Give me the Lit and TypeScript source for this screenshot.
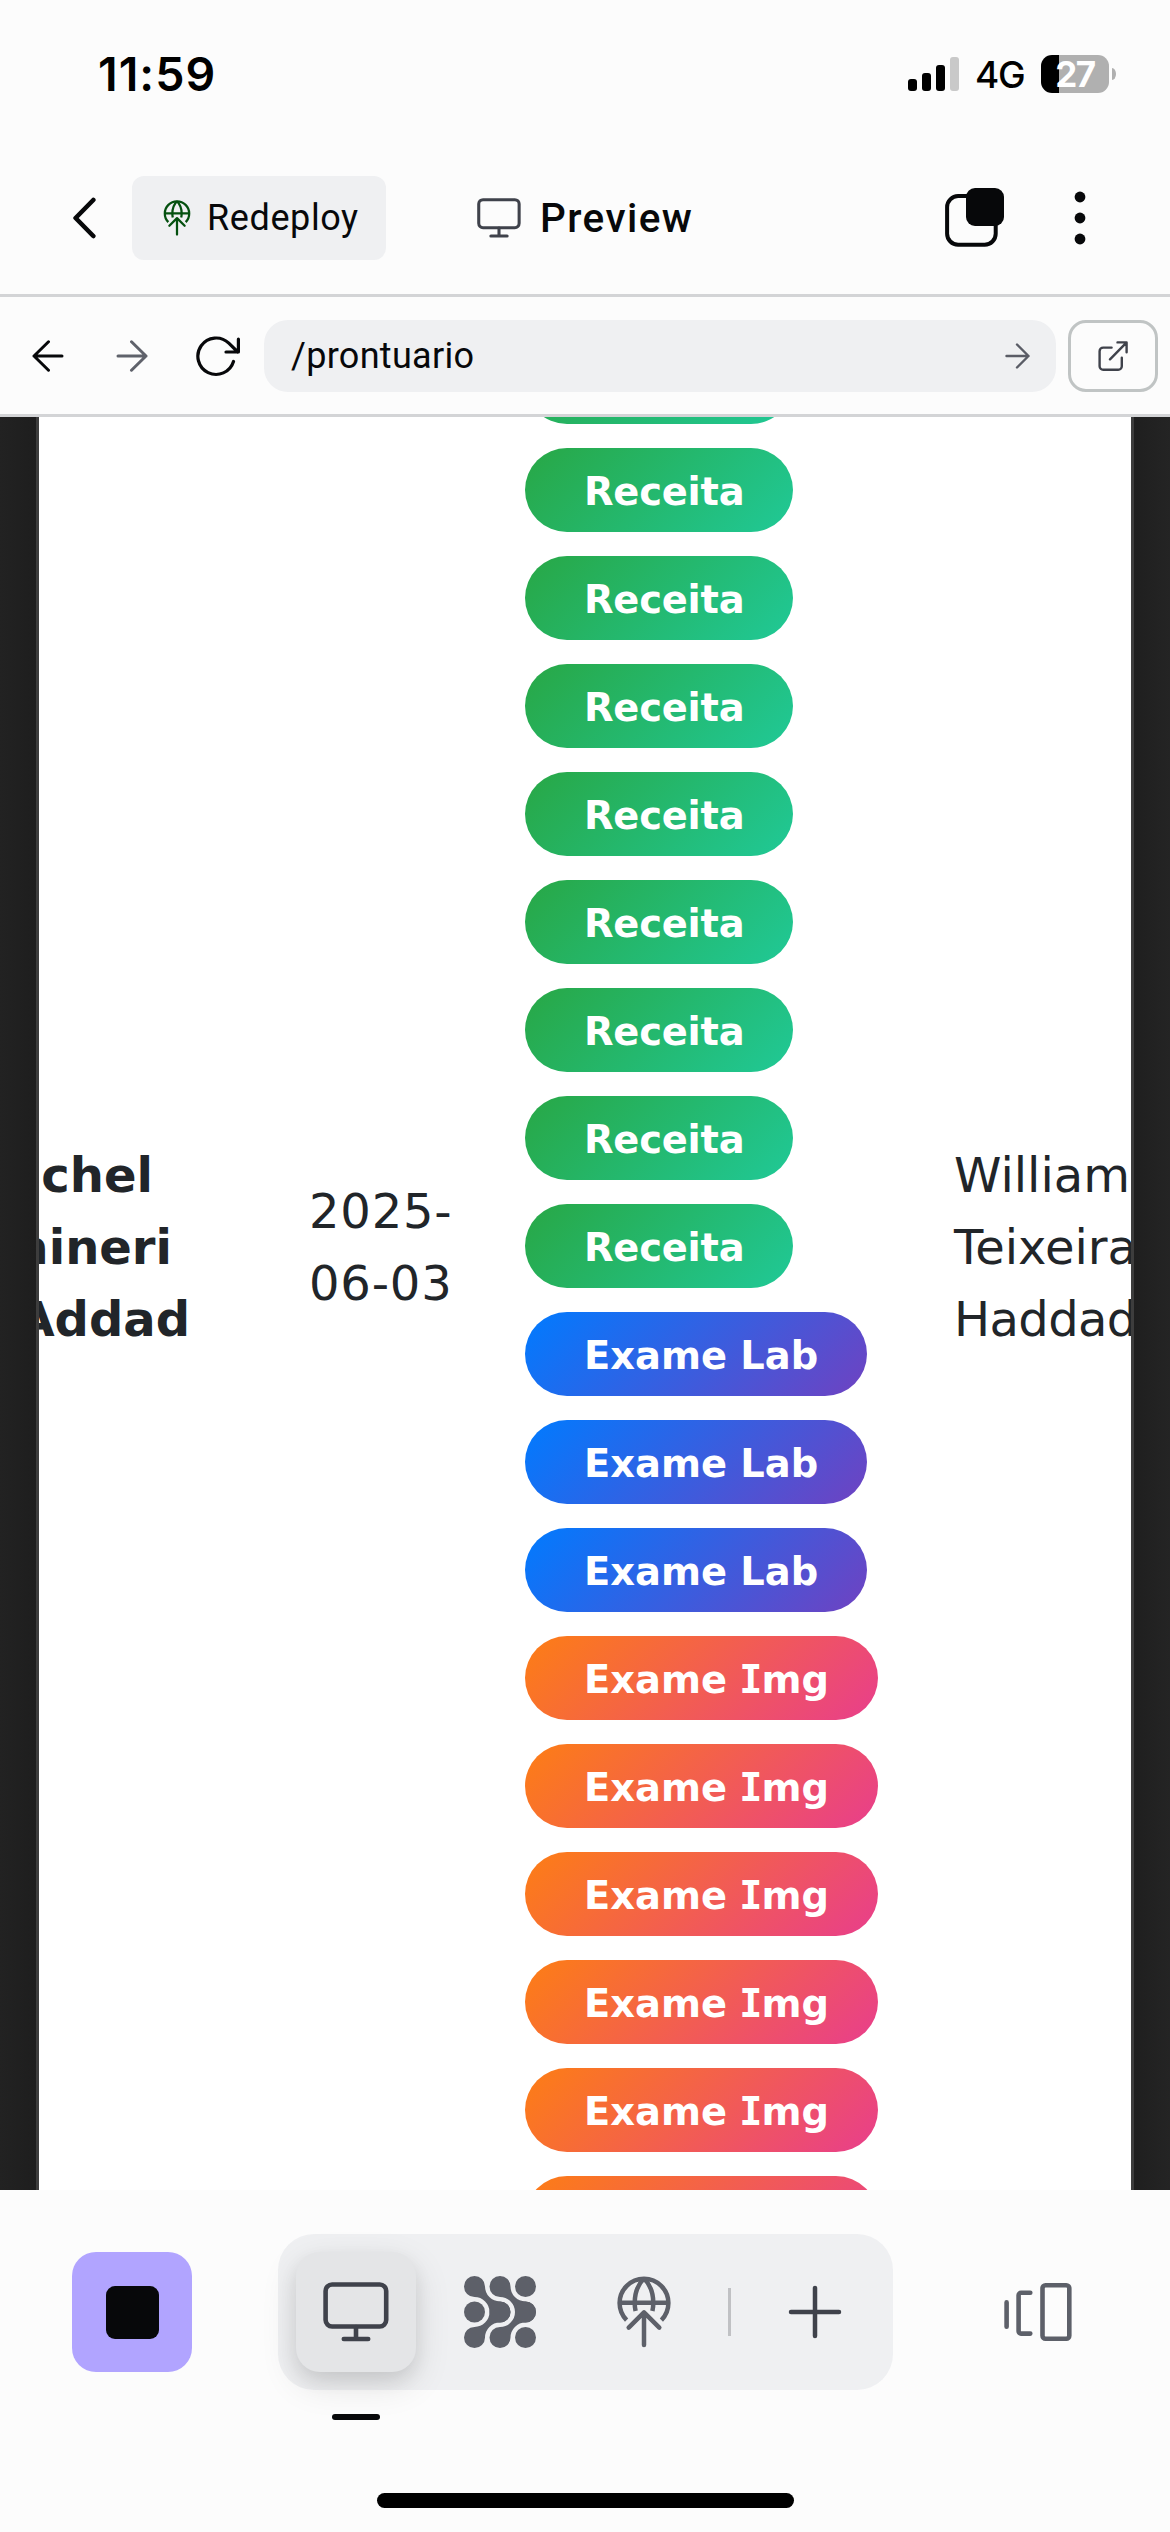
import { LitElement, html, css, svg } from "lit";
import { customElement } from "lit/decorators.js";

const monitor = html`<svg class="monitor" viewBox="0 0 66 60" fill="none" stroke="currentColor" stroke-width="4.6" stroke-linecap="round">
  <rect x="2.6" y="2.5" width="60.6" height="42" rx="6.5"></rect>
  <path d="M33 45v12M20.8 57h24.4"></path>
</svg>`;

const deployGlobe = html`<svg class="globe" viewBox="0 0 72 72" fill="none" stroke="currentColor" stroke-width="4.5">
  <path d="M18.6 44.2A24.4 24.4 0 1 1 53.4 44.2"></path>
  <path d="M11.5 26.8h49M36 2.5C29.5 9 26.7 18 26.7 27q0 4 .9 8M36 2.5C42.5 9 45.3 18 45.3 27q0 4-.9 8"></path>
  <path d="M36 69V36.4M20.7 51.6 36 36.3 51.3 51.6" stroke-linecap="round" stroke-linejoin="round"></path>
</svg>`;

const neck = "M10.5 21A10.5 10.5 0 1 1 21 10.5A15 15 0 0 0 36 25.5A10.5 10.5 0 1 1 25.5 36A15 15 0 0 0 10.5 21Z";
const agentGrid = html`<svg class="grid-icon" viewBox="0 0 72 72" fill="currentColor">
  ${["", "translate(25.5 0)", "translate(0 72) scale(1 -1)", "translate(25.5 72) scale(1 -1)"].map(
    (t) => svg`<path d=${neck} transform=${t}></path>`
  )}
  <circle cx="61.5" cy="10.5" r="10.5"></circle>
  <circle cx="10.5" cy="36" r="10.5"></circle>
  <circle cx="61.5" cy="61.5" r="10.5"></circle>
</svg>`;

@customElement("status-bar")
class StatusBar extends LitElement {
  static styles = css`
    :host { display: flex; align-items: center; height: 136px; padding: 6px 54px 0 98px; box-sizing: content-box; color: #000; font-family: Inter, "Liberation Sans", sans-serif; }
    .time { flex: 1; font-size: 46.5px; font-weight: 600; letter-spacing: 1px; }
    .signal { width: 52px; height: 34px; margin-right: 15px; display: block; flex: none; }
    .net { flex: none; font-size: 37px; font-weight: 500; letter-spacing: -1.4px; width: 66px; white-space: nowrap; }
    .battery { flex: none; width: 68px; height: 38px; border-radius: 11px; background: linear-gradient(to right, #000 18px, #b0b0b0 18px); color: #fff; font-size: 35px; font-weight: 700; letter-spacing: -1.5px; line-height: 38px; text-align: center; }
    .nub { flex: none; width: 4px; height: 12px; margin-left: 3px; border-radius: 0 4px 4px 0 / 0 6px 6px 0; background: #b0b0b0; }
  `;
  render() {
    return html`
      <span class="time">11:59</span>
      <svg class="signal" viewBox="0 0 52 34">
        <rect x="0" y="22" width="9" height="12" rx="3"></rect>
        <rect x="14" y="16" width="9" height="18" rx="3"></rect>
        <rect x="28" y="8" width="9" height="26" rx="3"></rect>
        <rect x="42" y="0" width="9" height="34" rx="3" fill="#c9c9c9"></rect>
      </svg>
      <span class="net">4G</span>
      <span class="battery">27</span><span class="nub"></span>
    `;
  }
}

@customElement("app-header")
class AppHeader extends LitElement {
  static styles = css`
    :host { display: flex; align-items: center; height: 152px; padding: 0 84px 0 72px; border-bottom: 3px solid #d3d4d6; color: #07080a; font-family: Roboto, "Open Sans", sans-serif; }
    svg { display: block; flex: none; }
    .back { width: 24px; height: 42px; }
    .redeploy { display: flex; align-items: center; box-sizing: border-box; width: 254px; height: 84px; margin-left: 36px; padding-left: 27px; border-radius: 12px; background: #eff0f2; font-size: 36px; letter-spacing: 0.6px; }
    .globe { width: 36px; height: 36px; margin-right: 12px; color: #04500f; }
    .title { display: flex; align-items: center; flex: 1; margin-left: 91px; font-size: 40.5px; font-weight: 500; letter-spacing: 1.4px; }
    .monitor { width: 44px; height: 40px; margin-right: 19px; color: #3f424b; }
    .tabs { width: 60px; height: 60px; margin-right: 69px; }
    .dots { width: 12px; height: 54px; }
  `;
  render() {
    return html`
      <svg class="back" viewBox="0 0 24 42" fill="none" stroke="currentColor" stroke-width="4.6" stroke-linecap="round" stroke-linejoin="round"><path d="M21.3 3 3.6 21l17.7 18"></path></svg>
      <div class="redeploy">${deployGlobe}<span>Redeploy</span></div>
      <div class="title">${monitor}<span>Preview</span></div>
      <svg class="tabs" viewBox="0 0 60 60">
        <rect x="2.1" y="8.1" width="48.6" height="48.6" rx="11" fill="none" stroke="currentColor" stroke-width="4"></rect>
        <rect x="21" y="0" width="38" height="38" rx="9" fill="currentColor"></rect>
      </svg>
      <svg class="dots" viewBox="0 0 12 54" fill="currentColor"><circle cx="6" cy="6" r="5.4"></circle><circle cx="6" cy="27" r="5.4"></circle><circle cx="6" cy="48" r="5.4"></circle></svg>
    `;
  }
}

@customElement("address-bar")
class AddressBar extends LitElement {
  static styles = css`
    :host { display: flex; align-items: center; height: 117px; padding: 0 12px 0 32px; border-bottom: 3px solid #d3d4d6; color: #07080a; font-family: Roboto, "Open Sans", sans-serif; }
    svg { display: block; flex: none; fill: none; stroke: currentColor; stroke-linecap: round; stroke-linejoin: round; }
    .arrow { width: 32px; height: 32px; stroke-width: 3; }
    .fwd { margin-left: 52px; color: #5f626b; }
    .reload { width: 46px; height: 42px; margin-left: 47px; stroke-width: 3.2; }
    .url { flex: 1; display: flex; align-items: center; justify-content: space-between; box-sizing: border-box; height: 72px; margin-left: 23px; padding: 0 26px 0 27px; border-radius: 24px; background: #eff0f2; font-size: 36px; letter-spacing: 0.3px; }
    .go { width: 25px; height: 26px; stroke-width: 2.4; color: #5a5c66; }
    .open { display: flex; align-items: center; justify-content: center; box-sizing: border-box; width: 90px; height: 72px; margin-left: 12px; border: 3px solid #c0c4c4; border-radius: 18px; color: #3f424b; }
    .ext { width: 30px; height: 30px; stroke-width: 2.4; }
  `;
  render() {
    return html`
      <svg class="arrow" viewBox="0 0 32 32"><path d="M30 16H2M16.5 1.8 2 16l14.5 14.2"></path></svg>
      <svg class="arrow fwd" viewBox="0 0 32 32"><path d="M2 16h28M15.5 1.8 30 16 15.5 30.2"></path></svg>
      <svg class="reload" viewBox="0 0 46 42"><path d="M38.5 26.5A18.2 18.2 0 1 1 33.8 8.2L42.8 17M43.4 4.2V17H31"></path></svg>
      <div class="url"><span>/prontuario</span>
        <svg class="go" viewBox="0 0 25 26"><path d="M1.5 13h22M12 1.5 23.5 13 12 24.5"></path></svg>
      </div>
      <div class="open"><svg class="ext" viewBox="0 0 30 30"><path d="M13.6 6.6H5.2a3.6 3.6 0 0 0-3.6 3.6v15a3.6 3.6 0 0 0 3.6 3.6h15a3.6 3.6 0 0 0 3.6-3.6v-8.4M12 18.3 28.4 1.6M19.5 1.4h9.1v9.8"></path></svg></div>
    `;
  }
}

type Kind = "receita" | "lab" | "img";
const kinds: Kind[] = [
  ...Array<Kind>(9).fill("receita"),
  ...Array<Kind>(3).fill("lab"),
  ...Array<Kind>(6).fill("img"),
];
const labels = {
  receita: html`Receita`,
  lab: html`Exame Lab`,
  img: html`Exame <span class="slab">I</span>mg`,
};

@customElement("page-frame")
class PageFrame extends LitElement {
  static styles = css`
    :host { display: block; height: 1773px; padding: 0 36px; background: linear-gradient(to right, #222 0, #1e1e1e 36px, #1f1f1f calc(100% - 36px), #242424 100%); overflow: hidden; }
    .row { display: flex; align-items: flex-start; box-sizing: border-box; height: 1773px; border: solid #3d3d3d; border-width: 0 3px; background: #fff; color: #212529; overflow: hidden; font: 48px/72px Verdana, "DejaVu Sans", sans-serif; }
    .patient { flex: none; width: 151px; padding-top: 722px; display: flex; flex-direction: column; align-items: flex-end; font-weight: 700; }
    .l1 { padding-right: 37px; }
    .l2 { padding-right: 18px; }
    .date { flex: none; width: 160px; margin-left: 119px; padding-top: 758px; letter-spacing: 0.8px; }
    .types { flex: none; display: flex; flex-direction: column; gap: 24px; width: 429px; margin: -77px 0 0 56px; }
    .doctor { flex: none; padding-top: 722px; }
    .tight { letter-spacing: -0.6px; }
    .pill { display: flex; align-items: center; flex: none; box-sizing: border-box; height: 84px; padding: 4px 0 0 59px; border-radius: 42px; color: #fff; font-weight: 700; font-size: 38.4px; line-height: 1; white-space: pre; }
    .receita { width: 268px; letter-spacing: -0.2px; background: linear-gradient(135deg, #28a745, #20c997); }
    .lab { width: 342px; background: linear-gradient(135deg, #007bff, #6f42c1); }
    .img { width: 353px; background: linear-gradient(135deg, #fd7e14, #e83e8c); }
    .slab { font-family: "DejaVu Sans Mono", monospace; margin: 0 -1px; }
  `;
  render() {
    return html`<div class="row">
      <div class="patient"><span class="l1">Rachel</span><span class="l2">Maineri</span><span>Addad</span></div>
      <div class="date">2025-<br />06-03</div>
      <div class="types">${kinds.map((k) => html`<div class="pill ${k}"><span>${labels[k]}</span></div>`)}</div>
      <div class="doctor">William<br />Teixeira<br /><span class="tight">Haddad</span></div>
    </div>`;
  }
}

@customElement("tool-dock")
class ToolDock extends LitElement {
  static styles = css`
    :host { display: flex; flex-direction: column; height: 342px; color: #5d6069; }
    svg { display: block; flex: none; }
    .dock { display: flex; align-items: center; height: 156px; padding: 44px 98px 0 72px; }
    .stop { display: flex; align-items: center; justify-content: center; width: 120px; height: 120px; border-radius: 24px; background: #b1a4ff; }
    .square { width: 53px; height: 53px; border-radius: 9px; background: #07080a; }
    .tray { display: flex; align-items: center; box-sizing: border-box; width: 615px; height: 156px; margin-left: 86px; padding-left: 18px; border-radius: 36px; background: #eff0f2; }
    .active { display: flex; align-items: center; justify-content: center; width: 120px; height: 120px; border-radius: 24px; background: #e4e5e7; color: #3f424b; box-shadow: 0 12px 36px rgba(0, 0, 0, 0.12), 0 8px 18px rgba(0, 0, 0, 0.08); }
    .monitor { width: 66px; height: 60px; }
    .grid-icon { width: 72px; height: 72px; margin-left: 48px; }
    .globe { width: 72px; height: 72px; margin-left: 72px; }
    .rule { width: 3px; height: 48px; margin-left: 48px; background: #c0c1c4; }
    .plus { width: 54px; height: 54px; margin-left: 57px; color: #3f424b; }
    .panels { width: 68px; height: 60px; margin-left: auto; }
    .mark { width: 48px; height: 6px; margin: 24px 0 0 332px; border-radius: 3px; background: #07080a; }
    .home { width: 417px; height: 15px; margin: 73px auto 0; border-radius: 8px; background: #000; }
  `;
  render() {
    return html`
      <div class="dock">
        <div class="stop"><div class="square"></div></div>
        <div class="tray">
          <div class="active">${monitor}</div>
          ${agentGrid}${deployGlobe}
          <div class="rule"></div>
          <svg class="plus" viewBox="0 0 54 54" stroke="currentColor" stroke-width="4.5" stroke-linecap="round"><path d="M27 3v48M3 27h48"></path></svg>
        </div>
        <svg class="panels" viewBox="0 0 68 60" fill="none" stroke="currentColor" stroke-width="4.6" stroke-linecap="round" stroke-linejoin="round">
          <path d="M2.6 20.4v24.4M26.3 10.8H17a2.4 2.4 0 0 0-2.4 2.4v36a2.4 2.4 0 0 0 2.4 2.4h9.3"></path>
          <rect x="38.5" y="3.3" width="26.8" height="53.4" rx="3"></rect>
        </svg>
      </div>
      <div class="mark"></div>
      <div class="home"></div>
    `;
  }
}

@customElement("app-root")
class AppRoot extends LitElement {
  static styles = css`
    :host { display: block; width: 1170px; height: 2532px; background: #fcfcfc; overflow: hidden; }
  `;
  render() {
    return html`
      <status-bar></status-bar>
      <app-header></app-header>
      <address-bar></address-bar>
      <page-frame></page-frame>
      <tool-dock></tool-dock>
    `;
  }
}
